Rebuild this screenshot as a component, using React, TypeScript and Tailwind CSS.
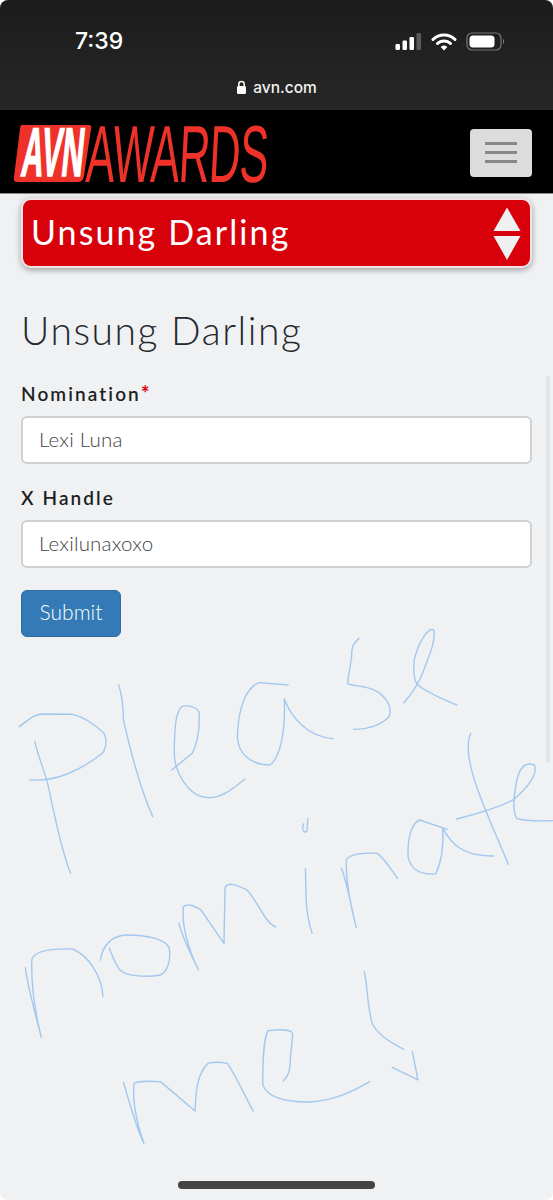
import React from "react";

const lato = "font-['Lato','Noto_Sans',sans-serif]";

function Logo() {
  return (
    <svg width="300" height="83" viewBox="12 110 300 83" className="block" aria-label="AVN Awards">
      <path d="M22 125 H89 Q92 125 91 129 L84 176 Q83 182 78 182 H17 Q13 182 14 177 L20 129 Q20 125 22 125 Z" fill="#ee3229" />
      <text transform="translate(20 176) skewX(-6) scale(0.44 1)" fontFamily="'Liberation Sans',sans-serif" fontWeight="700" fontSize="69" fill="#fff" stroke="#fff" strokeWidth="1.5">AVN</text>
      <text transform="translate(85 182) skewX(-3) scale(0.533 1)" fontFamily="'Liberation Sans',sans-serif" fontWeight="400" fontSize="81" letterSpacing="-1.5" fill="#ee3229">AWARDS</text>
    </svg>
  );
}

function StatusIcons() {
  return (
    <div className="flex items-center">
      <svg width="28" height="18" viewBox="0 0 28 18" className="block">
        <rect x="0.5" y="11" width="4.5" height="6" rx="1.2" fill="#fff" />
        <rect x="7.5" y="7.5" width="4.5" height="9.5" rx="1.2" fill="#fff" />
        <rect x="14.5" y="4" width="4.5" height="13" rx="1.2" fill="#fff" />
        <rect x="21.5" y="0" width="4.5" height="17" rx="1.2" fill="#5a5a5a" />
      </svg>
      <svg width="26" height="18" viewBox="0 0 26 18" className="block ml-[8px]">
        <path d="M2 6.5 C8 0.5 18 0.5 24 6.5" fill="none" stroke="#fff" strokeWidth="3" strokeLinecap="round" />
        <path d="M6.5 10.5 C10 7 16 7 19.5 10.5" fill="none" stroke="#fff" strokeWidth="3" strokeLinecap="round" />
        <path d="M9.7 14 L13 17.5 L16.3 14 C14.5 12 11.5 12 9.7 14 Z" fill="#fff" />
      </svg>
      <svg width="40" height="20" viewBox="0 0 40 20" className="block ml-[9px]">
        <rect x="1" y="1" width="34" height="17" rx="5" fill="none" stroke="#777" strokeWidth="1.2" />
        <rect x="3.5" y="3.5" width="25" height="12" rx="3.5" fill="#fff" />
        <path d="M37 7 C38.5 7.5 38.5 11.5 37 12 Z" fill="#777" />
      </svg>
    </div>
  );
}

function Handwriting() {
  const p2 = [
    "M55 320 C80 300 95 283 120 282 L205 283 C240 290 275 320 295 340 C305 365 300 385 290 400 C260 425 220 450 190 462 C160 475 120 482 85 480",
    "M99 365 C105 400 125 450 135 490 C150 560 170 680 200 760",
    "M337 195 C345 225 350 270 350 300 C365 370 395 500 433 590",
    "M487 450 L545 400 C560 370 566 320 565 280 C560 258 530 255 515 260 C495 280 495 340 494 400 C495 450 530 530 590 533 C630 535 660 505 695 477",
    "M817 195 L735 188 C700 200 675 260 673 350 C675 400 710 435 765 435 C795 415 810 330 806 237 C825 290 870 350 945 356",
    "M1018 55 C1000 70 996 85 997 110 L985 190 C1000 200 1040 195 1070 215 C1105 240 1110 270 1103 290 C1080 315 1040 330 1002 328",
    "M1145 248 C1165 225 1190 190 1205 140 C1220 100 1235 60 1230 30 C1215 20 1190 60 1175 115 C1170 150 1175 190 1185 195 C1215 220 1260 240 1295 255",
    "M873 595 L870 635 C860 640 855 625 860 612",
    "M1268 628 L1190 600 C1165 610 1155 660 1157 710 C1165 750 1190 765 1235 762 C1250 730 1258 680 1255 625 C1280 670 1310 710 1400 708",
    "M1335 340 C1325 360 1325 400 1335 440 C1350 520 1410 650 1441 733",
    "M1295 597 C1340 585 1400 570 1455 540 C1500 500 1525 460 1515 435 C1490 425 1470 440 1462 500 C1455 540 1455 580 1465 595 C1490 605 1530 603 1568 602",
  ];
  const p3 = [
    "M72 203 C78 260 100 340 117 412 C100 340 88 260 90 180 C95 155 140 145 205 147 C250 165 290 230 292 290",
    "M285 180 C290 135 320 105 360 105 C410 105 470 115 480 145 C485 180 475 215 455 225 C420 232 360 230 340 210 C325 190 318 165 310 145",
    "M507 70 C520 120 545 170 563 210 C530 140 515 70 520 20 C530 10 550 15 570 30 L635 130 L638 -35 C645 -60 680 -40 700 -30 C730 0 750 70 782 80",
    "M866 -93 L868 0 C870 40 875 70 885 100",
    "M968 -95 C985 -50 995 20 1010 82 C995 20 980 -60 982 -120 C990 -140 1040 -142 1070 -140 C1090 -125 1110 -90 1127 -65",
    "M350 547 C365 600 385 680 408 730 C385 660 375 600 380 550 C400 540 430 545 455 545 L553 633 C555 570 560 520 590 490 C610 485 630 487 645 490 C670 530 695 590 718 633",
    "M803 543 C820 525 822 510 823 480 L830 400 C825 388 790 388 760 392 C745 420 745 500 745 555 C760 595 810 607 880 606 C950 600 1000 575 1048 545",
    "M1032 215 C1042 240 1038 300 1055 370 C1070 405 1110 430 1145 448",
    "M1169 455 L1185 540 L1112 502",
  ];
  return (
    <svg width="553" height="560" viewBox="0 620 553 560" className="block mt-[-17px]" fill="none" stroke="#a3c8ef" strokeWidth="1.4" strokeLinecap="round" strokeLinejoin="round">
      <g transform="translate(0 620) scale(0.3527 0.3333)">
        {p2.map((d) => <path key={d} d={d} vectorEffect="non-scaling-stroke" />)}
      </g>
      <g transform="translate(0 900) scale(0.3527 0.3333)">
        {p3.map((d) => <path key={d} d={d} vectorEffect="non-scaling-stroke" />)}
      </g>
    </svg>
  );
}

export default function App() {
  return (
    <div className="relative w-[553px] h-[1200px] bg-white overflow-hidden">
      <div className="relative h-full rounded-[8px] overflow-hidden bg-[#eff1f3]">
        {/* Safari status area */}
        <div className="h-[110px] bg-gradient-to-b from-[#1c1c1c] to-[#272727] pt-[29px] flex flex-col">
          <div className="flex items-center justify-between pl-[75px] pr-[47px] h-[25px]">
            <span className="font-['Inter',sans-serif] text-[23px] font-medium leading-none text-white">7:39</span>
            <StatusIcons />
          </div>
          <div className="mt-[26px] flex items-center justify-center gap-[6px]">
            <svg width="11" height="15" viewBox="0 0 11 15" className="block">
              <path d="M2.8 6.5 V4.2 C2.8 0.6 8.2 0.6 8.2 4.2 V6.5" fill="none" stroke="#fff" strokeWidth="1.5" />
              <rect x="1" y="6" width="9" height="8" rx="1.5" fill="#fff" />
            </svg>
            <span className="font-['Inter',sans-serif] text-[15.5px] font-medium leading-none text-[#f2f2f2]">avn.com</span>
          </div>
        </div>

        {/* Navbar */}
        <div className="h-[84px] bg-black flex items-center justify-between pl-[12px] pr-[21px] border-b border-[#8a8a8a]">
          <Logo />
          <button className="w-[62px] h-[48px] bg-[#dcdcdc] rounded-[4px] flex flex-col items-center justify-center gap-[6px] mt-[2px]">
            <span className="block w-[32px] h-[3px] bg-[#888]" />
            <span className="block w-[32px] h-[3px] bg-[#888]" />
            <span className="block w-[32px] h-[3px] bg-[#888]" />
          </button>
        </div>

        {/* Main */}
        <div className={`px-[21px] pt-[4px] ${lato}`}>
          <div className="h-[70px] rounded-[10px] bg-[#d7000b] border-2 border-[#f3e3e4] shadow-[0_2px_6px_rgba(0,0,0,0.35)] flex items-center justify-between pl-[8px] pr-[9px]">
            <span className="text-[34px] leading-none text-white tracking-[2.1px] font-normal pb-[2px]">Unsung Darling</span>
            <div className="flex flex-col gap-[5px]">
              <svg width="28" height="24" viewBox="0 0 28 24" className="block"><path d="M14 0.5 L27.5 24 H0.5 Z" fill="#eef0f2" /></svg>
              <svg width="28" height="24" viewBox="0 0 28 24" className="block"><path d="M0.5 0 H27.5 L14 24 Z" fill="#eef0f2" /></svg>
            </div>
          </div>

          <h1 className="mt-[38px] text-[39px] leading-[48px] font-light text-[#24292e] tracking-[1.55px]">Unsung Darling</h1>

          <label className="block mt-[28px] text-[19px] leading-[24px] font-semibold text-[#1c1f23] tracking-[2.1px]">
            Nomination<span className="text-[#e0000f] text-[21px] font-bold leading-[0]">*</span>
          </label>
          <input
            readOnly
            value="Lexi Luna"
            className="block mt-[10px] w-[511px] h-[48px] rounded-[6px] border-2 border-[#cfd1d3] bg-white pl-[16px] pb-[2px] text-[20.5px] tracking-[0.2px] font-light text-[#3f4448] outline-none"
          />

          <label className="block mt-[22px] text-[19px] leading-[24px] font-semibold text-[#1c1f23] tracking-[2.1px]">X Handle</label>
          <input
            readOnly
            value="Lexilunaxoxo"
            className="block mt-[10px] w-[511px] h-[48px] rounded-[6px] border-2 border-[#cfd1d3] bg-white pl-[16px] pb-[2px] text-[20.5px] tracking-[0.2px] font-light text-[#3f4448] outline-none"
          />

          <button className="block mt-[22px] w-[100px] h-[47px] rounded-[6px] bg-[#337ab7] border border-[#2e6da4] pb-[3px] text-[21px] font-light text-white">
            Submit
          </button>
        </div>

        <Handwriting />

        {/* Scrollbar */}
        <div className="absolute left-[546px] top-[376px] w-[4px] h-[387px] rounded-full bg-[#e4e5e7]" />
        {/* Home indicator */}
        <div className="absolute left-[178px] top-[1181px] w-[197px] h-[8px] rounded-full bg-[#444]" />
      </div>
    </div>
  );
}
